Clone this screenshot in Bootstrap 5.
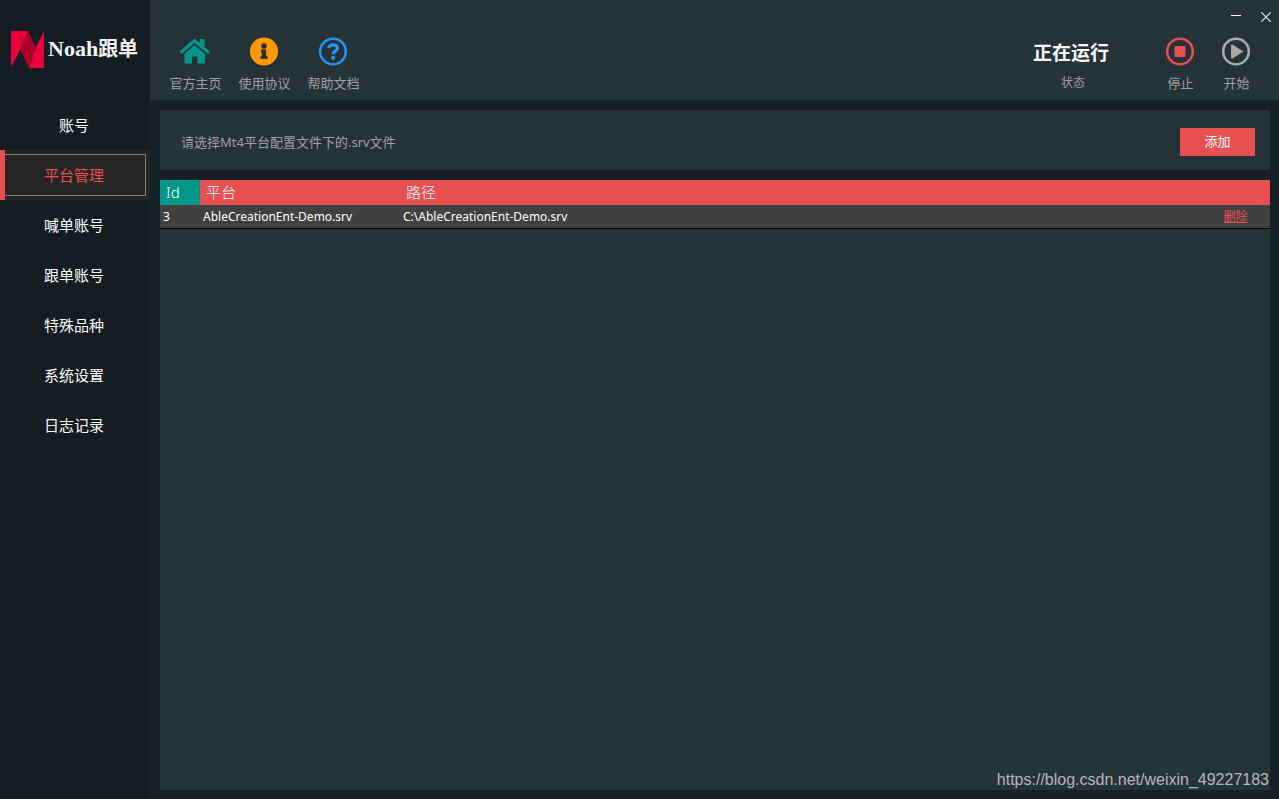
<!DOCTYPE html>
<html lang="zh-CN">
<head>
<meta charset="utf-8">
<meta name="viewport" content="width=device-width, initial-scale=1">
<title>Noah跟单</title>
<link href="https://cdn.jsdelivr.net/npm/bootstrap@5.3.0/dist/css/bootstrap.min.css" rel="stylesheet">
<style>
  body { background: #152028; color: #fff; font-family: "Noto Sans", "Noto Sans CJK SC", sans-serif; font-size: 13px; line-height: 20px; }
  .side { width: 150px; background: #151c22; }
  .brand { height: 100px; padding: 0 0 2px 11px; gap: 4px; color: #f2f2f2; font: bold 22px/28px "Liberation Serif", "Noto Sans CJK SC", serif; }
  .brand .cn { font-size: 20px; }
  .side .nav-link { height: 50px; padding: 0 2px 0 0; color: #fff; font-size: 15px; border-radius: 0; }
  .side .nav-link.active { background: #252525; color: #e65050; border-left: 5px solid #e65050; padding: 4px 4px 4px 0; }
  .side .nav-link.active span { flex: 1; height: 42px; line-height: 40px; border: 1px solid #808080; border-left: 0; padding-right: 2px; text-align: center; }
  .panel { background: #253238; }
  .topbar { height: 100px; padding-left: 19px; }
  .tool { align-self: flex-start; color: #a0a0a0; background: none; border: 0; padding: 0; width: 53px; text-decoration: none; text-align: center; white-space: nowrap; }
  .tool svg { display: block; margin: 0 0 6px 10px; }
  .tools { padding-top: 36px; gap: 16px; }
  .controls { padding-top: 36px; padding-right: 16px; gap: 3px; }
  .state { width: 90px; margin-right: 33px; color: #a0a0a0; font-size: 12px; text-align: center; }
  .state strong { display: block; color: #fff; font-size: 19px; line-height: 34px; margin-bottom: 3px; padding-right: 4px; }
  .winbtns { right: 0; top: 0; padding: 9px 6px 0 0; gap: 16px; }
  .winbtns button { width: 14px; height: 16px; background: none; border: 0; padding: 0; display: flex; align-items: center; justify-content: center; }
  .content { padding: 10px 9px 9px 10px; gap: 10px; }
  .prompt { height: 60px; padding: 3px 15px 0 21px; color: #a0a0a0; }
  .btn-add { width: 75px; height: 28px; padding: 0; border: 0; border-radius: 0; background: #e65050; color: #fff; font-size: 13px; }
  .btn-add:hover { background: #ef6464; color: #fff; }
  .grid { color: #fff; font-size: 12px; table-layout: fixed; width: 100%; }
  .grid th { height: 25px; padding: 0 6px 2px; background: #e65050; font-size: 15px; font-weight: 300; line-height: 22px; }
  .grid th:first-child { background: #009688; }
  .grid td { height: 23px; padding: 2px 3px 0; background: #404040; border-bottom: 1px solid #000; line-height: 20px; }
  .grid a { color: #e65050; }
  .c-id { width: 40px; } .c-name { width: 200px; } .c-act { width: 69px; }
  .source { right: 10px; bottom: 9px; color: #b4b8ba; font: 16px/20px "Liberation Sans", sans-serif; text-decoration: none; }
</style>
</head>
<body>
<div class="d-flex min-vh-100">
  <aside class="side flex-shrink-0">
    <div class="brand d-flex align-items-center">
      <svg width="33" height="37" viewBox="0 0 33 37" aria-hidden="true">
        <path fill="#e8003d" d="M0 0H17L10 17L0 36Z"/>
        <path fill="#e8003d" d="M33 0V37H18L24 18Z"/>
        <path fill="#a80027" d="M17 0L25 17L18 37L9 18Z"/>
      </svg>
      <span>Noah<span class="cn">跟单</span></span>
    </div>
    <nav class="nav flex-column">
      <a class="nav-link d-flex align-items-center justify-content-center" href="#">账号</a>
      <a class="nav-link active d-flex align-items-center" href="#" aria-current="page"><span>平台管理</span></a>
      <a class="nav-link d-flex align-items-center justify-content-center" href="#">喊单账号</a>
      <a class="nav-link d-flex align-items-center justify-content-center" href="#">跟单账号</a>
      <a class="nav-link d-flex align-items-center justify-content-center" href="#">特殊品种</a>
      <a class="nav-link d-flex align-items-center justify-content-center" href="#">系统设置</a>
      <a class="nav-link d-flex align-items-center justify-content-center" href="#">日志记录</a>
    </nav>
  </aside>

  <div class="d-flex flex-column flex-grow-1">
    <header class="topbar panel position-relative d-flex justify-content-between">
      <div class="tools d-flex">
        <a class="tool" href="#">
          <svg width="32" height="31" viewBox="0 0 32 31" fill="#009688" aria-hidden="true">
            <path d="M15.500 2.500L21 7V3H25.500V11L31 15.500L29 18L15.500 7L2.500 18L.5 15.500Z"/>
            <path d="M15.500 9L26 18V27.500H18.500V20.500H13V27.500H5.500V18Z"/>
          </svg>官方主页</a>
        <a class="tool" href="#">
          <svg width="32" height="31" viewBox="0 0 32 31" aria-hidden="true">
            <circle cx="16" cy="15.500" r="14" fill="#ff9800"/>
            <g fill="#253238"><circle cx="16" cy="10" r="2.700"/><path d="M13 13.500H18.200V20.300H19.500V23H12.500V20.300H13.800V16.200H13Z"/></g>
          </svg>使用协议</a>
        <a class="tool" href="#">
          <svg width="32" height="31" viewBox="0 0 32 31" fill="none" stroke="#2196f3" aria-hidden="true">
            <circle cx="16" cy="15.500" r="12.800" stroke-width="2.500"/>
            <path d="M11.500 12C12.500 9.500 14.200 8.800 16.200 8.800C18.800 8.800 20.500 10.300 20.500 12.200C20.500 15 16.200 14.800 16.200 18.200" stroke-width="3.200"/>
            <circle cx="16.200" cy="21.800" r="2.100" fill="#2196f3" stroke="none"/>
          </svg>帮助文档</a>
      </div>
      <div class="controls d-flex">
        <div class="state"><strong>正在运行</strong>状态</div>
        <button class="tool" type="button">
          <svg width="32" height="31" viewBox="0 0 32 31" aria-hidden="true">
            <circle cx="16" cy="15.500" r="12.800" fill="none" stroke="#e65050" stroke-width="2.500"/>
            <rect x="10.500" y="10" width="11" height="11" rx="1" fill="#e65050"/>
          </svg>停止</button>
        <button class="tool" type="button">
          <svg width="32" height="31" viewBox="0 0 32 31" aria-hidden="true">
            <circle cx="16" cy="15.500" r="12.800" fill="none" stroke="#a9a9a9" stroke-width="2.500"/>
            <path d="M11 9.500Q11 8 12.500 8.500L23.500 15.500L12.500 22.500Q11 23 11 21.500Z" fill="#a9a9a9"/>
          </svg>开始</button>
      </div>
      <div class="winbtns position-absolute d-flex">
        <button type="button" aria-label="最小化"><svg width="10" height="10" stroke="#fff"><path d="M0 3.500H10"/></svg></button>
        <button type="button" aria-label="关闭"><svg width="10" height="10" stroke="#e6e8f0" stroke-width="1.200"><path d="M0 0L10 10M10 0L0 10"/></svg></button>
      </div>
    </header>

    <main class="content d-flex flex-column flex-grow-1">
      <section class="prompt panel d-flex align-items-center justify-content-between">
        <span>请选择Mt4平台配置文件下的.srv文件</span>
        <button class="btn btn-add" type="button">添加</button>
      </section>
      <section class="panel flex-grow-1">
        <table class="grid">
          <colgroup><col class="c-id"><col class="c-name"><col><col class="c-act"></colgroup>
          <thead><tr><th scope="col">Id</th><th scope="col">平台</th><th scope="col">路径</th><th></th></tr></thead>
          <tbody><tr><td>3</td><td>AbleCreationEnt-Demo.srv</td><td>C:\AbleCreationEnt-Demo.srv</td><td class="text-center"><a href="#">删除</a></td></tr></tbody>
        </table>
      </section>
    </main>
  </div>
</div>
<a class="source position-absolute" href="https://blog.csdn.net/weixin_49227183">https://blog.csdn.net/weixin_49227183</a>
<script src="https://cdn.jsdelivr.net/npm/bootstrap@5.3.0/dist/js/bootstrap.bundle.min.js"></script>
</body>
</html>
